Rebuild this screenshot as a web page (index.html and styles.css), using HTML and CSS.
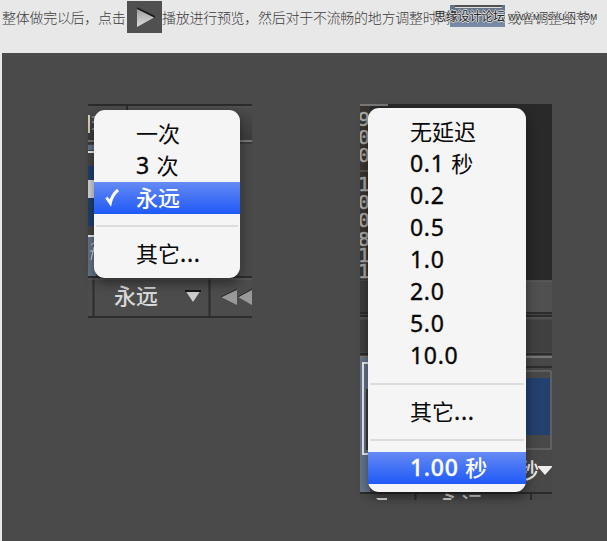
FILE: index.html
```html
<!DOCTYPE html>
<html lang="zh-CN">
<head>
<meta charset="utf-8">
<title>动画预览设置</title>
<link rel="stylesheet" href="styles.css">
</head>
<body>
<header class="intro">
  <span>整体做完以后，点击</span>
  <svg class="play" width="35" height="32" viewBox="0 0 35 32"><defs><linearGradient id="metal" x2="0" y2="1"><stop stop-color="#999"/><stop offset="1" stop-color="#ddd"/></linearGradient></defs><rect width="35" height="32" fill="#505050"/><path d="M10 6v20l18-10z" fill="url(#metal)"/><path d="M10 8V6l18 9v2z" fill="#171717"/></svg>
  <span>播放进行预览，然后对于不流畅的地方调整时间</span>
  <span class="delay"><i></i></span>
  <span>或者调整细节。</span>
  <div class="mark"><b>思缘设计论坛</b><svg width="91" height="12"><text x="0" y="10" textLength="89" lengthAdjust="spacingAndGlyphs">WWW.MISSYUAN.COM</text></svg></div>
</header>
<main class="stage">
  <section class="shot loop">
    <svg class="scene" width="164" height="214" viewBox="0 0 164 214">
      <defs><linearGradient id="bar" x2="0" y2="1"><stop stop-color="#4d4d4d"/><stop offset="1" stop-color="#3c3c3c"/></linearGradient></defs>
      <rect width="164" height="214" fill="#464646"/>
      <rect width="164" height="36" fill="url(#bar)"/>
      <path d="M0 0h164v2H0zM38 2h2v8h-2z" fill="#2b2b2b"/>
      <path d="M40 3h124" stroke="#555"/>
      <path d="M0 37h164" stroke="#777" stroke-width="2"/><path d="M0 39h164" stroke="#303030"/>
      <path d="M0 11h2v18H0z" fill="#d8d0ba"/><path d="M4 13h3M4 18h3M4 25h3" stroke="#bbb"/>
      <path d="M0 41h8v5H0z" fill="#65758e"/><path d="M0 47h8v2H0z" fill="#eee"/>
      <path d="M0 62h8v60H0z" fill="#20406f"/><path d="M0 76h8v18H0z" fill="#d5d7dc"/>
      <path d="M0 132h8v42H0z" fill="#66748a"/><path d="M0 132h8" stroke="#eee" stroke-width="2"/>
      <path d="M3 141l4-3M2 147h5M6 143l-3 13" stroke="#ddd" fill="none"/>
      <path d="M152 40h12v132h-12z" fill="#494949"/><path d="M153 40v132" stroke="#555"/>
      <rect y="172" width="164" height="40" fill="#4c4c4c"/>
      <path d="M0 173h164M5.500 174v38M121.500 174v38M0 213h164" stroke="#2d2d2d" stroke-width="2"/>
      <path d="M0 175h164" stroke="#606060"/>
      <path d="M97 186h16l-8 12z" fill="#ccc"/><path d="M97 187h16" stroke="#171717" stroke-width="2"/>
      <path d="M149 186v15l-16-8zM164 186v15l-14-8z" fill="#999"/><path d="M133 193l16-8M150 193l14-8" stroke="#292929"/>
      <text class="label" x="26" y="200">永远</text>
    </svg>
    <ul class="menu">
      <li>一次</li>
      <li><em>3 </em>次</li>
      <li class="on"><svg class="tick" width="18" height="20" viewBox="0 0 18 20"><path d="M2.500 10.500l3.800 5.500Q8 8 14 3" fill="none" stroke="#fff" stroke-width="3"/></svg>永远</li>
      <li class="rule"></li>
      <li>其它<em>...</em></li>
    </ul>
  </section>
  <section class="shot time">
    <svg class="scene" width="192" height="396" viewBox="0 0 192 396">
      <rect width="192" height="396" fill="#484848"/>
      <rect width="192" height="176" fill="#292929"/>
      <path d="M0 0h10v176H0z" fill="#39342f"/><path d="M0 1h28" stroke="#777" stroke-width="2"/>
      <g class="digits"><text x="-2" y="22">9</text><text x="-2" y="40">0</text><text x="-2" y="58">0</text><text x="-2" y="87">1</text><text x="-2" y="105">0</text><text x="-2" y="123">0</text><text x="-2" y="142">8</text><text x="-2" y="158">1</text><text x="-2" y="174">1</text></g>
      <path d="M0 67h8" stroke="#777"/>
      <path d="M166 177h26v31h-26z" fill="#505050"/><path d="M0 177h8v31H0z" fill="#3c3c3c"/>
      <path d="M166 177h26" stroke="#606060"/><path d="M0 209h192M0 212h192M0 250h192" stroke="#2c2c2c" stroke-width="2"/>
      <path d="M0 214h192" stroke="#5b5b5b"/><path d="M0 216h192v32H0z" fill="#404040"/>
      <path d="M0 253h192" stroke="#777" stroke-width="2"/><path d="M0 263h192" stroke="#2d2d2d" stroke-width="2"/>
      <path d="M0 254h10v136H0z" fill="#66758b"/><path d="M8 259H3v91h7" fill="none" stroke="#eee" stroke-width="2"/><path d="M6 285h3v61H6z" fill="#393939"/>
      <path d="M164 267h27v78h-27z" fill="#484848" stroke="#777"/><path d="M166 274h24v57h-24z" fill="#24406f"/>
      <path d="M0 389h192M55.500 389v7M171 389v7" stroke="#2b2b2b" stroke-width="2"/>
      <text class="sec" x="158" y="374">秒</text><path d="M178 362h14v1l-7 8-7-8z" fill="#eee"/>
      <text class="label" x="79" y="408">永远</text><path d="M16 394h11v2H18z" fill="#ddd"/>
    </svg>
    <ul class="menu">
      <li>无延迟</li>
      <li><em>0.1 </em>秒</li>
      <li><em>0.2</em></li>
      <li><em>0.5</em></li>
      <li><em>1.0</em></li>
      <li><em>2.0</em></li>
      <li><em>5.0</em></li>
      <li><em>10.0</em></li>
      <li class="rule"></li>
      <li>其它<em>...</em></li>
      <li class="rule"></li>
      <li class="on"><em>1.00 </em>秒</li>
    </ul>
  </section>
</main>
</body>
</html>
```

FILE: styles.css
```css
* { box-sizing: border-box; }
body { margin: 0; background: #e8e8e8; overflow: hidden; font-family: "Noto Sans", "Noto Sans CJK SC", sans-serif; }
.intro { position: relative; display: flex; height: 53px; padding: 1px 0 0 2px; font: 300 14px/32px "Noto Sans CJK SC", sans-serif; letter-spacing: -.28px; color: #3c3c3c; white-space: nowrap; }
.intro span { flex: none; }
.play { flex: none; margin-left: 1.520px; }
.intro .delay { width: 55px; height: 22px; margin: 4px 2px 0 0; background: linear-gradient(#657286, #788ba7); }
.delay i { display: block; height: 3px; margin: 0 3px 0 5px; background: #505050; border-bottom: 1px solid #ddd; }
.mark { position: absolute; left: 434px; top: 7px; display: flex; gap: 3px; align-items: center; height: 18px; }
.mark b { width: 71px; font: 400 12px/18px "Noto Sans CJK SC", sans-serif; letter-spacing: -.2px; color: #252525; text-shadow: 1px 0 #ddd, -1px 0 #ddd, 0 1px #ddd, 0 -1px #ddd; }
.mark text { font: 8.500px "Liberation Sans", sans-serif; letter-spacing: 0; fill: #222; stroke: #e8e8e8; stroke-width: 1px; paint-order: stroke; }
.stage { display: flex; align-items: flex-start; gap: 108px; height: 488px; margin-left: 2px; padding: 51px 0 0 86px; background: #4a4a4a; }
.shot { position: relative; flex: none; }
.scene { display: block; }
.label { font-size: 22px; font-weight: 500; fill: #d8d8d8; }
.sec { font-size: 21px; font-weight: 500; fill: #eee; }
.digits { font: 20px "DejaVu Sans Mono", monospace; fill: #aaa; stroke: #aaa; stroke-width: .5px; }
.menu { position: absolute; margin: 0; padding: 8px 0; list-style: none; background: #f5f5f5; border-radius: 11px; box-shadow: 0 5px 12px rgba(0,0,0,.45); color: #080808; font: 22px/30px "Noto Sans", "Noto Sans CJK SC", sans-serif; }
.menu li { position: relative; height: 32px; padding-left: 42px; white-space: pre; }
.menu em { font-style: normal; font-size: 23px; line-height: 1; letter-spacing: .7px; -webkit-text-stroke: .35px; }
.menu .on { color: #fff; font-weight: 500; background: linear-gradient(#658af4, #1f59f7); }
.menu .rule { height: 24px; padding: 0; }
.rule::before { content: ""; position: absolute; left: 2px; right: 2px; top: 11px; height: 2px; background: #dcdcdc; }
.tick { position: absolute; left: 10px; top: 5px; }
.loop .menu { left: 6px; top: 6px; width: 146px; height: 168px; }
.time .menu { left: 8px; top: 4px; width: 158px; height: 384px; }
```
